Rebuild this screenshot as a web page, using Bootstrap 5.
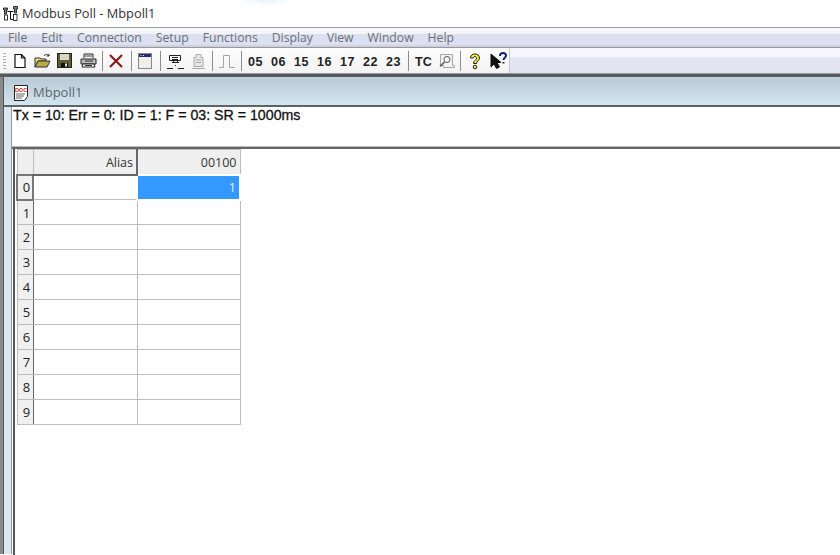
<!DOCTYPE html>
<html lang="en">
<head>
<meta charset="utf-8">
<title>Modbus Poll - Mbpoll1</title>
<link href="https://cdn.jsdelivr.net/npm/bootstrap@5.3.0/dist/css/bootstrap.min.css" rel="stylesheet">
<style>
html,body{height:100%;overflow:hidden}
body{background:#fff;color:#000;font-family:"Open Sans","Liberation Sans",sans-serif;font-size:12px;width:840px;height:555px}
.app-title{height:27px;padding-left:2px;gap:3px;font-size:12.8px;color:#333;background:radial-gradient(ellipse 30px 6px at 265px 0,#e4f4f8,transparent)}
.menu-strip{height:20px;border-top:1px solid #999;background:linear-gradient(#f8fbfa 0,#f2f5f6 30%,#dcdff0 32%,#dde0f2 85%,#c8cad6 100%);padding-left:8px;gap:14px;color:#6a6f78;font-size:12.2px}
.menu-strip span{line-height:18px}
.tool-strip{height:27px;border-top:1px solid #999;border-bottom:1px solid #9a9aa5;background:linear-gradient(#f6f7fc 0,#f4f5fb 35%,#e2e4f2 40%,#e1e3f1 100%)}
.tool-on{width:510px;height:100%;flex:none;background:linear-gradient(#fdfdfd,#f3f3f3);border-right:1px solid #c4c6d2;position:relative}
.tool-on>*{position:absolute}
.grip{left:3px;top:5px;width:3px;height:16px;background:repeating-linear-gradient(#aab 0 1px,transparent 1px 3px)}
.sep{top:3px;width:1px;height:20px;background:#8c8c8c}
.num{top:5px;font:700 12.5px/18px "Liberation Sans",sans-serif;color:#222;letter-spacing:.5px}
.mdi-wrap{height:479px;background:#565a5e;padding-top:2px}
.mdi-frame{height:100%;margin-top:1px;background:linear-gradient(90deg,#8a8a8a 0,#8a8a8a 3px,#555 3px,#555 4px,#d9e7f2 4px,#d9e7f2 11px,#999 11px,#999 12px)}
.doc-title{height:30px;margin-left:4px;padding-left:9px;gap:4px;background:linear-gradient(#b9cad7,#d3e5ef);border-top:1px solid #c5d2dc;border-bottom:2px solid #5f6368;color:#5b6670;font-size:13px;padding-top:3px}
.doc-body{margin-left:12px;height:448px;background:#fff;display:flex;flex-direction:column}
.stat-pane{height:42px;padding-left:1px;font:500 14.2px/16px "Liberation Sans",sans-serif;border-bottom:2px solid #666;box-shadow:inset 0 -1px 0 #bbb;color:#111;-webkit-text-stroke:.3px #111;flex:none}
.grid-pane{flex:1;margin-left:1px;border-left:2px solid #555;padding-left:1px}
.sheet{border-collapse:collapse;width:auto;font-size:12.5px;table-layout:fixed;margin:0}
.sheet td,.sheet th{height:25px;padding:2px 3px 0 0;border:1px solid #bdbdbd;text-align:right;font-weight:400;background:#fff;color:#333;vertical-align:middle}
.sheet th{background:#efefef;padding-top:4px}
.sheet .corner{width:16px}
.sheet .col-a{width:104px;padding-right:3px;border-right:2px solid #666;border-bottom:2px solid #666}
.sheet .col-b{width:103px}
.sheet .rowh{text-align:center;padding:2px 0 0 3px;font-size:13px;border-right:1px solid #666;background:#f0f0f0;color:#222}
.sheet .cur-h{border-top:2px solid #777;border-left:2px solid #777;border-right:2px solid #777;border-bottom:2px solid #777}
.sheet td.cur{background:#3399ff;color:#e6f2ff;border:2px solid #fff}
</style>
</head>
<body>
<div class="app-title d-flex align-items-center">
<svg width="17" height="17" viewBox="0 0 17 17"><g fill="#777" stroke="#222" stroke-width=".9"><path d="M1.500 3h4v2h-1v4h-2V5h-1z"/><path d="M11.500 1.500h4v2.500h-1v4h-2V4h-1z"/><rect x="2.500" y="10" width="3" height="5" fill="#fff"/><rect x="11.500" y="9.500" width="3.500" height="6" fill="#fff"/></g><path d="M5.500 6.500h6M8.500 6.500v8H11" stroke="#111" fill="none"/></svg>
<span>Modbus Poll - Mbpoll1</span>
</div>
<div class="menu-strip d-flex align-items-center">
<span>File</span><span>Edit</span><span>Connection</span><span>Setup</span><span>Functions</span><span>Display</span><span>View</span><span>Window</span><span>Help</span>
</div>
<div class="tool-strip d-flex">
<div class="tool-on">
<i class="grip"></i>
<svg style="left:13px;top:5px" width="14" height="16" viewBox="0 0 14 16"><path d="M2 1.500h6.500l3.500 3.500v9.500H2z M8.500 1.500V5H12" fill="#fff" stroke="#111" stroke-width="1.200"/></svg>
<svg style="left:34px;top:5px" width="17" height="15" viewBox="0 0 17 15"><path d="M1 5h5l1 1h5v2H4L1 14z" fill="#e8e08a" stroke="#333"/><path d="M4 8h12l-3 6H1z" fill="#b5ad45" stroke="#333"/><path d="M10 3c1-2 3-2 5 0M15 .8V3h-2.200" fill="none" stroke="#222"/></svg>
<svg style="left:57px;top:5px" width="15" height="15" viewBox="0 0 15 15"><rect x=".5" y=".5" width="14" height="14" fill="#5f5f2e" stroke="#222"/><rect x="3" y="1" width="9" height="6" fill="#d8d8c8"/><rect x="4" y="10" width="7" height="4" fill="#111"/><rect x="8" y="10.500" width="2" height="3" fill="#ddd"/></svg>
<svg style="left:80px;top:5px" width="17" height="15" viewBox="0 0 17 15"><path d="M4 5V1h9v4" fill="#fff" stroke="#222"/><path d="M1 6h15v5H1z" fill="#bbb" stroke="#222"/><path d="M3 11h11l1 3H2z" fill="#fff" stroke="#222"/><path d="M5 3h7M5 8h8M5 12.500h7" stroke="#333"/></svg>
<i class="sep" style="left:102px"></i>
<svg style="left:108px;top:5px" width="16" height="16" viewBox="0 0 16 16"><path d="M2 2l12 12M14 2L2 14" stroke="#8a1c1c" stroke-width="2.200" fill="none"/></svg>
<i class="sep" style="left:131px"></i>
<svg style="left:138px;top:5px" width="14" height="16" viewBox="0 0 14 16"><rect x=".5" y=".5" width="13" height="15" fill="#efeee8" stroke="#888"/><rect x="1" y="1" width="12" height="3" fill="#1c2f78"/><path d="M2.500 2.500h1M5 2.500h1" stroke="#fff"/></svg>
<i class="sep" style="left:160px"></i>
<svg style="left:167px;top:6px" width="17" height="17" viewBox="0 0 17 17"><path d="M2.500 1.500h11v5h-11zM5 3.500h6M5 5.500h6M5 8.500h7M6.500 6.500v2M10.500 6.500v2" fill="none" stroke="#222"/><path d="M0 14.500h6M11 14.500h6M8.500 11v1" stroke="#222" fill="none"/></svg>
<svg style="left:191px;top:5px" width="15" height="17" viewBox="0 0 15 17"><path d="M5 1.500h5v3h2v9h-9v-9h2zM5 7h5M5 9.500h5M1 15.500h13" fill="#e6e6e6" stroke="#a8a8a8"/></svg>
<i class="sep" style="left:212px"></i>
<svg style="left:219px;top:6px" width="16" height="15" viewBox="0 0 16 15"><path d="M0 13.500h4.500v-12h6v12H16" fill="none" stroke="#a5a5a5"/></svg>
<i class="sep" style="left:241px"></i>
<span class="num" style="left:248px">05</span><span class="num" style="left:271px">06</span><span class="num" style="left:294px">15</span><span class="num" style="left:317px">16</span><span class="num" style="left:340px">17</span><span class="num" style="left:363px">22</span><span class="num" style="left:386px">23</span>
<i class="sep" style="left:408px"></i>
<span class="num" style="left:415px;letter-spacing:.2px">TC</span>
<svg style="left:438px;top:5px" width="17" height="16" viewBox="0 0 17 16"><path d="M2.500 1.500h12v11h2v2h-11v-2h-3z" fill="#f2f2f2" stroke="#a5a5a5"/><circle cx="9" cy="6.500" r="3" fill="#fff" stroke="#555"/><path d="M6.500 9L2 13.500" stroke="#555" stroke-width="1.500"/></svg>
<i class="sep" style="left:460px"></i>
<svg style="left:469px;top:5px" width="12" height="17" viewBox="0 0 12 17"><path d="M1.500 5C1.500 2 3.500 1 6 1s4.500 1.500 4.500 4c0 2.500-3 3-3 5.500h-3c0-3 3-3.500 3-5.500 0-2-3-2-3 0z" fill="#f3ec3a" stroke="#222"/><circle cx="6" cy="14" r="1.800" fill="#f3ec3a" stroke="#222"/></svg>
<svg style="left:490px;top:4px" width="17" height="17" viewBox="0 0 17 17"><path d="M1 2v13l3-3 2.500 4.500 3-1.500-2.500-4.500H11z" fill="#111" stroke="#111"/><path d="M10 4c0-2 1-3 3-3s3 1 3 2.500c0 2-2.500 2.500-2.500 4.500M13.500 10v1.500" fill="none" stroke="#14247e" stroke-width="2"/></svg>
</div>
</div>
<div class="mdi-wrap">
<div class="mdi-frame">
<div class="doc-title d-flex align-items-center">
<svg width="16" height="18" viewBox="0 0 16 18"><path d="M1.500 1.500h13v11l-3 4h-10z" fill="#fff" stroke="#222"/><text x="8" y="7.500" text-anchor="middle" font-family="Liberation Sans" font-size="5.500" font-weight="700" fill="#c9302c">DOC</text><path d="M3 10h9M3 12h8M3 14h6" stroke="#666"/></svg>
<span>Mbpoll1</span>
</div>
<div class="doc-body">
<div class="stat-pane">Tx = 10: Err = 0: ID = 1: F = 03: SR = 1000ms</div>
<div class="grid-pane">
<table class="sheet">
<thead><tr><th class="corner"></th><th class="col-a">Alias</th><th class="col-b">00100</th></tr></thead>
<tbody>
<tr><td class="rowh cur-h">0</td><td></td><td class="cur">1</td></tr>
<tr><td class="rowh">1</td><td></td><td></td></tr>
<tr><td class="rowh">2</td><td></td><td></td></tr>
<tr><td class="rowh">3</td><td></td><td></td></tr>
<tr><td class="rowh">4</td><td></td><td></td></tr>
<tr><td class="rowh">5</td><td></td><td></td></tr>
<tr><td class="rowh">6</td><td></td><td></td></tr>
<tr><td class="rowh">7</td><td></td><td></td></tr>
<tr><td class="rowh">8</td><td></td><td></td></tr>
<tr><td class="rowh">9</td><td></td><td></td></tr>
</tbody>
</table>
</div>
</div>
</div>
</div>
<script src="https://cdn.jsdelivr.net/npm/bootstrap@5.3.0/dist/js/bootstrap.bundle.min.js"></script>
</body>
</html>
